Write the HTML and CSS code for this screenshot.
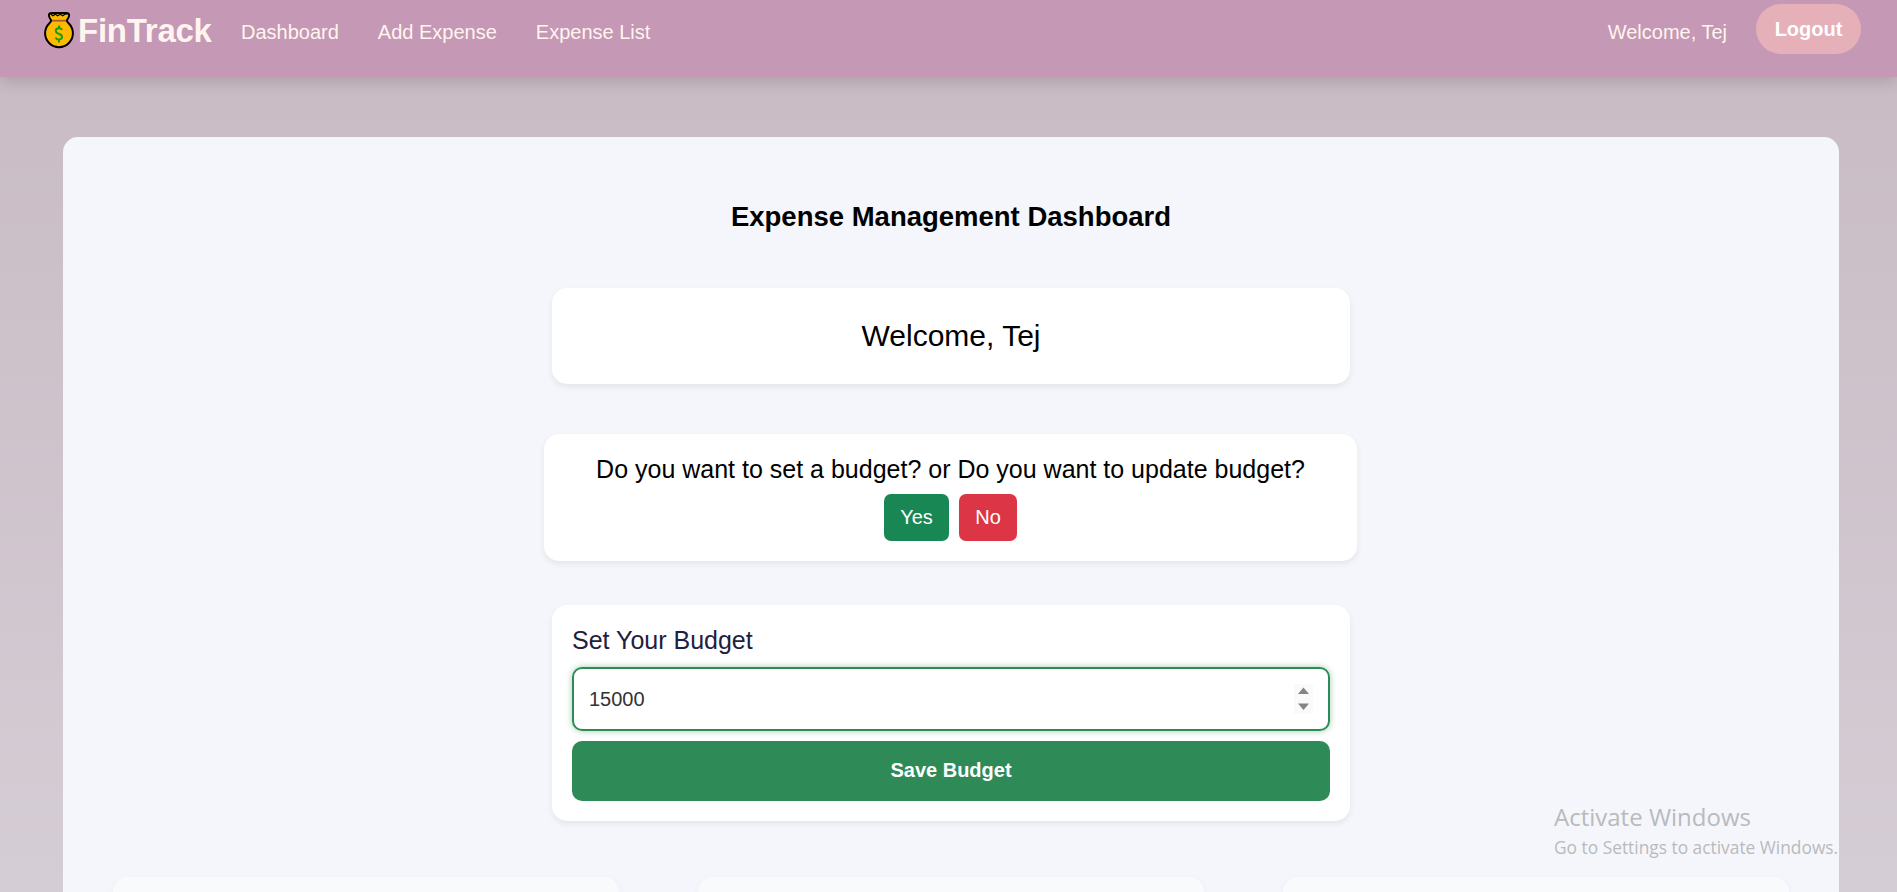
FILE: index.html
```html
<!DOCTYPE html>
<html lang="en">
<head>
<meta charset="utf-8">
<title>FinTrack</title>
<link rel="stylesheet" href="styles.css">
</head>
<body>
<nav class="navbar">
  <a class="brand">
    <svg class="bag" viewBox="0 0 30 37">
      <path d="M6.200 1.200C8 .8 22 .8 23.800 1.200C26 2 25.200 5 22.800 8.400C23 9.800 23.800 10.500 24.600 11.200A13.900 13.900 0 1 1 5.400 11.200C6.200 10.500 7 9.800 7.200 8.400C4.800 5 4 2 6.200 1.200Z" fill="#ffb900" stroke="#000" stroke-width="2"/>
      <path d="M6.500 2l2.500 1.700 2.300-1.500 2.400 1.600 2.600-1.600 2.400 1.600 2.300-1.600 2.500-.2" fill="none" stroke="#000" stroke-width="1.200"/>
      <path d="M8 8.700h14" stroke="#a4593b" stroke-width="1.800"/>
      <path d="M18 17.800c-.6-1.300-1.800-1.600-3.200-1.500-4.200.4-3.700 4.400-.2 5.400 4.500 1.200 4.600 5.300.4 5.700-1.800.2-3-.5-3.400-1.900M15 13.500v3M15 27v3.500" fill="none" stroke="#16a010" stroke-width="2"/>
    </svg>
    <span>FinTrack</span>
  </a>
  <div class="links"><a>Dashboard</a><a>Add Expense</a><a>Expense List</a></div>
  <span class="user">Welcome, Tej</span>
  <button class="logout">Logout</button>
</nav>
<main class="panel">
  <h1 class="title">Expense Management Dashboard</h1>
  <section class="card welcome">Welcome, Tej</section>
  <section class="card question">
    <p class="prompt">Do you want to set a budget? or Do you want to update budget?</p>
    <div class="choices"><button class="btn yes">Yes</button><button class="btn no">No</button></div>
  </section>
  <form class="card budget">
    <label class="label">Set Your Budget</label>
    <div class="field">
      <span>15000</span>
      <svg class="spinner" viewBox="0 0 19 30"><path fill="#fafafa" d="M0 0h19v30H0z"/><path fill="#858585" d="M4 10l5.500-6.500L15 10zM4 19.500h11L9.500 26z"/></svg>
    </div>
    <button class="save" type="button">Save Budget</button>
  </form>
  <div class="stats"><div class="stat"></div><div class="stat"></div><div class="stat"></div></div>
</main>
<aside class="watermark"><div class="wm-title">Activate Windows</div><div class="wm-text">Go to Settings to activate Windows.</div></aside>
</body>
</html>
```
FILE: styles.css
```css
* { box-sizing: border-box; }
body {
  margin: 0;
  height: 892px;
  overflow: hidden;
  font-family: "Liberation Sans", Arial, sans-serif;
  font-size: 20px;
  color: #000;
  background: linear-gradient(#c8bac3, #d5cdd5);
}
button { border: 0; font-family: inherit; font-size: 20px; padding: 0; }
.navbar {
  position: relative;
  display: flex;
  align-items: flex-start;
  height: 77px;
  padding: 0 36px 0 44px;
  background: #c598b5;
  color: #fff5ee;
  box-shadow: 0 5px 15px rgba(0, 0, 0, .15);
}
.brand {
  display: flex;
  width: 197px;
  gap: 4px;
  padding-top: 12px;
  font-size: 33px;
  font-weight: bold;
  letter-spacing: -.25px;
  line-height: 37px;
  white-space: nowrap;
}
.bag { width: 30px; height: 37px; flex: none; }
.links { display: flex; gap: 39px; flex: 1; padding-top: 20px; line-height: 24px; }
.user { margin-right: 29px; padding-top: 20px; line-height: 24px; }
.logout {
  width: 105px;
  height: 50px;
  margin-top: 4px;
  border-radius: 25px;
  background: #e5b0b8;
  color: #fff;
  font-weight: bold;
}
.panel {
  width: 1776px;
  height: 755px;
  margin: 60px 0 0 63px;
  padding: 63px 50px 0;
  border-radius: 15px 15px 0 0;
  background: #f4f6fb;
  display: flex;
  flex-direction: column;
  align-items: center;
}
.panel > * { flex: none; }
.title { margin: 0 0 55px; font-size: 27.500px; line-height: 33px; white-space: nowrap; }
.card {
  width: 798px;
  border-radius: 15px;
  background: #fff;
  box-shadow: 0 3px 6px rgba(0, 0, 0, .07);
}
.welcome { height: 96px; margin-bottom: 50px; font-size: 30px; line-height: 96px; text-align: center; }
.question { width: 813px; height: 127px; margin: 0 1px 43.500px 0; padding-top: 20px; }
.prompt { margin: 0 0 10px; font-size: 25px; line-height: 30px; text-align: center; white-space: nowrap; }
.choices { display: flex; justify-content: center; gap: 10px; }
.btn { height: 47px; border-radius: 7px; color: #fff; }
.yes { width: 65px; background: #198754; }
.no { width: 58px; background: #dc3545; }
.budget { height: 216.500px; margin-bottom: 55.500px; padding: 20px; }
.label { display: block; margin-bottom: 12.500px; color: #1f2040; font-size: 25px; line-height: 30px; }
.field {
  display: flex;
  align-items: center;
  justify-content: space-between;
  height: 64px;
  margin-bottom: 9.500px;
  padding: 0 15px;
  border: 2px solid #2e8b57;
  border-radius: 10px;
  color: #333;
  box-shadow: 0 0 6px rgba(46, 139, 87, .45);
}
.spinner { width: 19px; height: 30px; }
.save { display: block; width: 100%; height: 60.500px; border-radius: 10px; background: #2e8b57; color: #fff; font-weight: bold; }
.stats { display: grid; grid-template-columns: repeat(3, 1fr); gap: 79px; width: 100%; }
.stat { height: 15px; border-radius: 15px 15px 0 0; background: #f9fafc; box-shadow: 0 3px 8px rgba(0, 0, 0, .05); }
.watermark {
  position: absolute;
  left: 1554px;
  top: 801px;
  color: #b9babd;
  font-family: "Open Sans", sans-serif;
  white-space: nowrap;
}
.wm-title { font-size: 24px; line-height: 32px; }
.wm-text { font-size: 17.350px; line-height: 28px; }
```
